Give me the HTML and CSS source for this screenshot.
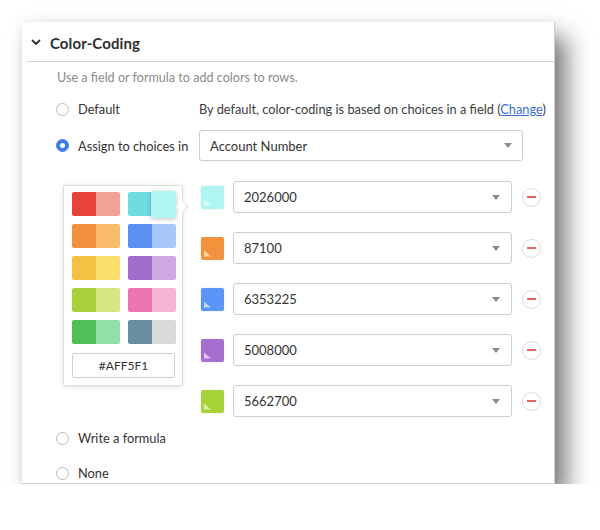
FILE: index.html
```html
<!DOCTYPE html>
<html lang="en">
<head>
<meta charset="utf-8">
<title>Color-Coding</title>
<link rel="stylesheet" href="styles.css">
</head>
<body>
<div class="card">
  <div class="header">
    <svg class="chevron" width="10" height="7" viewBox="0 0 10 7"><path d="M1.5 1.5 L5 5 L8.5 1.5" fill="none" stroke="#333" stroke-width="1.8" stroke-linecap="round" stroke-linejoin="round"/></svg>
    <span class="title">Color-Coding</span>
  </div>
  <div class="body">
    <div class="subtitle">Use a field or formula to add colors to rows.</div>

    <div class="opt opt-default">
      <div class="opt-label"><span class="radio"></span><span>Default</span></div>
      <div class="desc">By default, color-coding is based on choices in a field (<a class="link" href="#">Change</a>)</div>
    </div>

    <div class="opt opt-assign">
      <div class="opt-label"><span class="radio checked"></span><span>Assign to choices in</span></div>
      <div class="select wide"><span>Account Number</span><span class="caret"></span></div>
    </div>

    <div class="color-area">
      <div class="picker">
        <div class="swatches">
          <div class="pair"><span style="background:#E8433A"></span><span style="background:#EFA394"></span></div>
          <div class="pair"><span style="background:#6EDCE0"></span><span class="sel" style="background:#AFF5F1"></span></div>
          <div class="pair"><span style="background:#F0913D"></span><span style="background:#F7BB6B"></span></div>
          <div class="pair"><span style="background:#5B90F0"></span><span style="background:#A7C7FA"></span></div>
          <div class="pair"><span style="background:#F4C243"></span><span style="background:#FADF6B"></span></div>
          <div class="pair"><span style="background:#A26ECB"></span><span style="background:#CFA9E3"></span></div>
          <div class="pair"><span style="background:#A9D13B"></span><span style="background:#D6E682"></span></div>
          <div class="pair"><span style="background:#EE73B1"></span><span style="background:#F5B4D6"></span></div>
          <div class="pair"><span style="background:#50BF58"></span><span style="background:#8FE0A9"></span></div>
          <div class="pair"><span style="background:#6A8DA2"></span><span style="background:#D9D9D9"></span></div>
        </div>
        <div class="hex">#AFF5F1</div>
      </div>

      <div class="color-rows">
        <div class="crow">
          <span class="sq" style="background:#AFF5F1"></span>
          <div class="select"><span>2026000</span><span class="caret"></span></div>
          <span class="minus"></span>
        </div>
        <div class="crow">
          <span class="sq" style="background:#F2923D"></span>
          <div class="select"><span>87100</span><span class="caret"></span></div>
          <span class="minus"></span>
        </div>
        <div class="crow">
          <span class="sq" style="background:#5B95F7"></span>
          <div class="select"><span>6353225</span><span class="caret"></span></div>
          <span class="minus"></span>
        </div>
        <div class="crow">
          <span class="sq" style="background:#A56ECF"></span>
          <div class="select"><span>5008000</span><span class="caret"></span></div>
          <span class="minus"></span>
        </div>
        <div class="crow">
          <span class="sq" style="background:#A7D23A"></span>
          <div class="select"><span>5662700</span><span class="caret"></span></div>
          <span class="minus"></span>
        </div>
      </div>
    </div>

    <div class="opt opt-formula">
      <div class="opt-label"><span class="radio"></span><span>Write a formula</span></div>
    </div>
    <div class="opt opt-none">
      <div class="opt-label"><span class="radio"></span><span>None</span></div>
    </div>
  </div>
</div>
</body>
</html>
```

FILE: styles.css
```css
* { box-sizing: border-box; }

html, body {
  margin: 0;
  padding: 0;
  background: #ffffff;
}

body {
  font-family: Lato, "Noto Sans", "Liberation Sans", sans-serif;
  color: #333;
  padding: 22px 0 0 22px;
}

.card {
  width: 533px;
  height: 462px;
  background: #fff;
  overflow: hidden;
  border-right: 1px solid #d0d0d0;
  border-bottom: 1px solid #d0d0d0;
  box-shadow: 12px 15px 22px 0 rgba(0, 0, 0, 0.5), 0 0 10px rgba(0, 0, 0, 0.08);
}

.header {
  height: 40px;
  margin-left: 5px;
  border-bottom: 1px solid #d4d4d4;
  display: flex;
  align-items: center;
  padding-left: 4px;
  padding-top: 2px;
}

.chevron {
  display: block;
  margin-right: 9px;
}

.title {
  font-size: 15px;
  font-weight: 700;
  color: #2f2f2f;
  letter-spacing: 0.1px;
}

.body {
  padding-left: 34px;
}

.subtitle {
  margin-top: 8px;
  line-height: 16px;
  font-size: 12.6px;
  color: #8b8b8b;
  padding-left: 1px;
}

.opt {
  display: flex;
  align-items: center;
  font-size: 12.8px;
}

.opt-label {
  width: 143px;
  display: flex;
  align-items: center;
  flex: none;
}

.radio {
  width: 13px;
  height: 13px;
  border-radius: 50%;
  border: 1px solid #b9b9b9;
  background: #fff;
  margin-right: 9px;
  flex: none;
  position: relative;
}

.radio.checked {
  background: #3E7EEA;
  border-color: #3E7EEA;
}

.radio.checked::after {
  content: "";
  position: absolute;
  left: 3px;
  top: 3px;
  width: 5px;
  height: 5px;
  border-radius: 50%;
  background: #fff;
}

.opt-default {
  margin-top: 8px;
  height: 30px;
}

.desc {
  color: #3c3c3c;
}

.link {
  color: #3a6fd6;
  text-decoration: underline;
}

.opt-assign {
  margin-top: 6px;
  height: 31px;
}

.select {
  height: 32px;
  border: 1px solid #cdcdcd;
  border-radius: 3px;
  background: #fff;
  display: flex;
  align-items: center;
  justify-content: space-between;
  padding: 0 11px 0 10px;
  font-size: 13px;
  color: #333;
}

.select.wide {
  width: 324px;
  height: 31px;
  padding-right: 10px;
}

.caret {
  width: 0;
  height: 0;
  border-left: 4.5px solid transparent;
  border-right: 4.5px solid transparent;
  border-top: 5px solid #8a8a8a;
}

.color-area {
  position: relative;
  margin-top: 20px;
  padding-left: 143px;
}

.color-rows {
  display: flex;
  flex-direction: column;
  gap: 19px;
}

.crow {
  display: flex;
  align-items: center;
  height: 32px;
}

.sq {
  width: 23px;
  height: 23px;
  border-radius: 2px;
  margin-left: 2px;
  margin-right: 9px;
  position: relative;
  flex: none;
  box-shadow: 0 0 2px rgba(0, 0, 0, 0.12);
}

.sq::after {
  content: "";
  position: absolute;
  left: 3px;
  bottom: 3px;
  width: 7px;
  height: 6px;
  background: rgba(255, 255, 255, 0.6);
  clip-path: polygon(0 0, 0 100%, 100% 100%);
}

.crow .select {
  width: 279px;
}

.minus {
  width: 19px;
  height: 19px;
  border-radius: 50%;
  border: 1px solid #d9d9d9;
  margin-left: 10px;
  flex: none;
  background: #fff;
  display: flex;
  align-items: center;
  justify-content: center;
}

.minus::after {
  content: "";
  display: block;
  width: 9px;
  height: 2px;
  background: #e86464;
}

.picker {
  position: absolute;
  left: 7px;
  top: 4px;
  width: 120px;
  height: 201px;
  background: #fff;
  border: 1px solid #dedede;
  border-radius: 2px;
  box-shadow: 0 1px 5px rgba(0, 0, 0, 0.12);
  padding: 6px 0 0 8px;
  z-index: 2;
}

.picker::after {
  content: "";
  position: absolute;
  right: -5px;
  top: 16px;
  width: 8px;
  height: 8px;
  background: #fff;
  border-top: 1px solid #dedede;
  border-right: 1px solid #dedede;
  transform: rotate(45deg);
}

.swatches {
  display: grid;
  grid-template-columns: 48px 48px;
  column-gap: 8px;
  row-gap: 8px;
}

.pair {
  display: flex;
  height: 24px;
}

.pair span {
  width: 24px;
  height: 24px;
  display: block;
}

.pair span:first-child {
  border-radius: 2px 0 0 2px;
}

.pair span:last-child {
  border-radius: 0 2px 2px 0;
}

.pair span.sel {
  width: 26px;
  height: 27px;
  margin-top: -1px;
  margin-left: -1px;
  border-radius: 2px;
  box-shadow: 0 1px 4px rgba(0, 0, 0, 0.25);
  position: relative;
}

.hex {
  margin-top: 9px;
  width: 103px;
  height: 25px;
  border: 1px solid #cfcfcf;
  border-radius: 2px;
  display: flex;
  align-items: center;
  justify-content: center;
  font-size: 12px;
  color: #333;
}

.opt-formula {
  margin-top: 11px;
  height: 20px;
}

.opt-none {
  margin-top: 15px;
  height: 20px;
}
```
